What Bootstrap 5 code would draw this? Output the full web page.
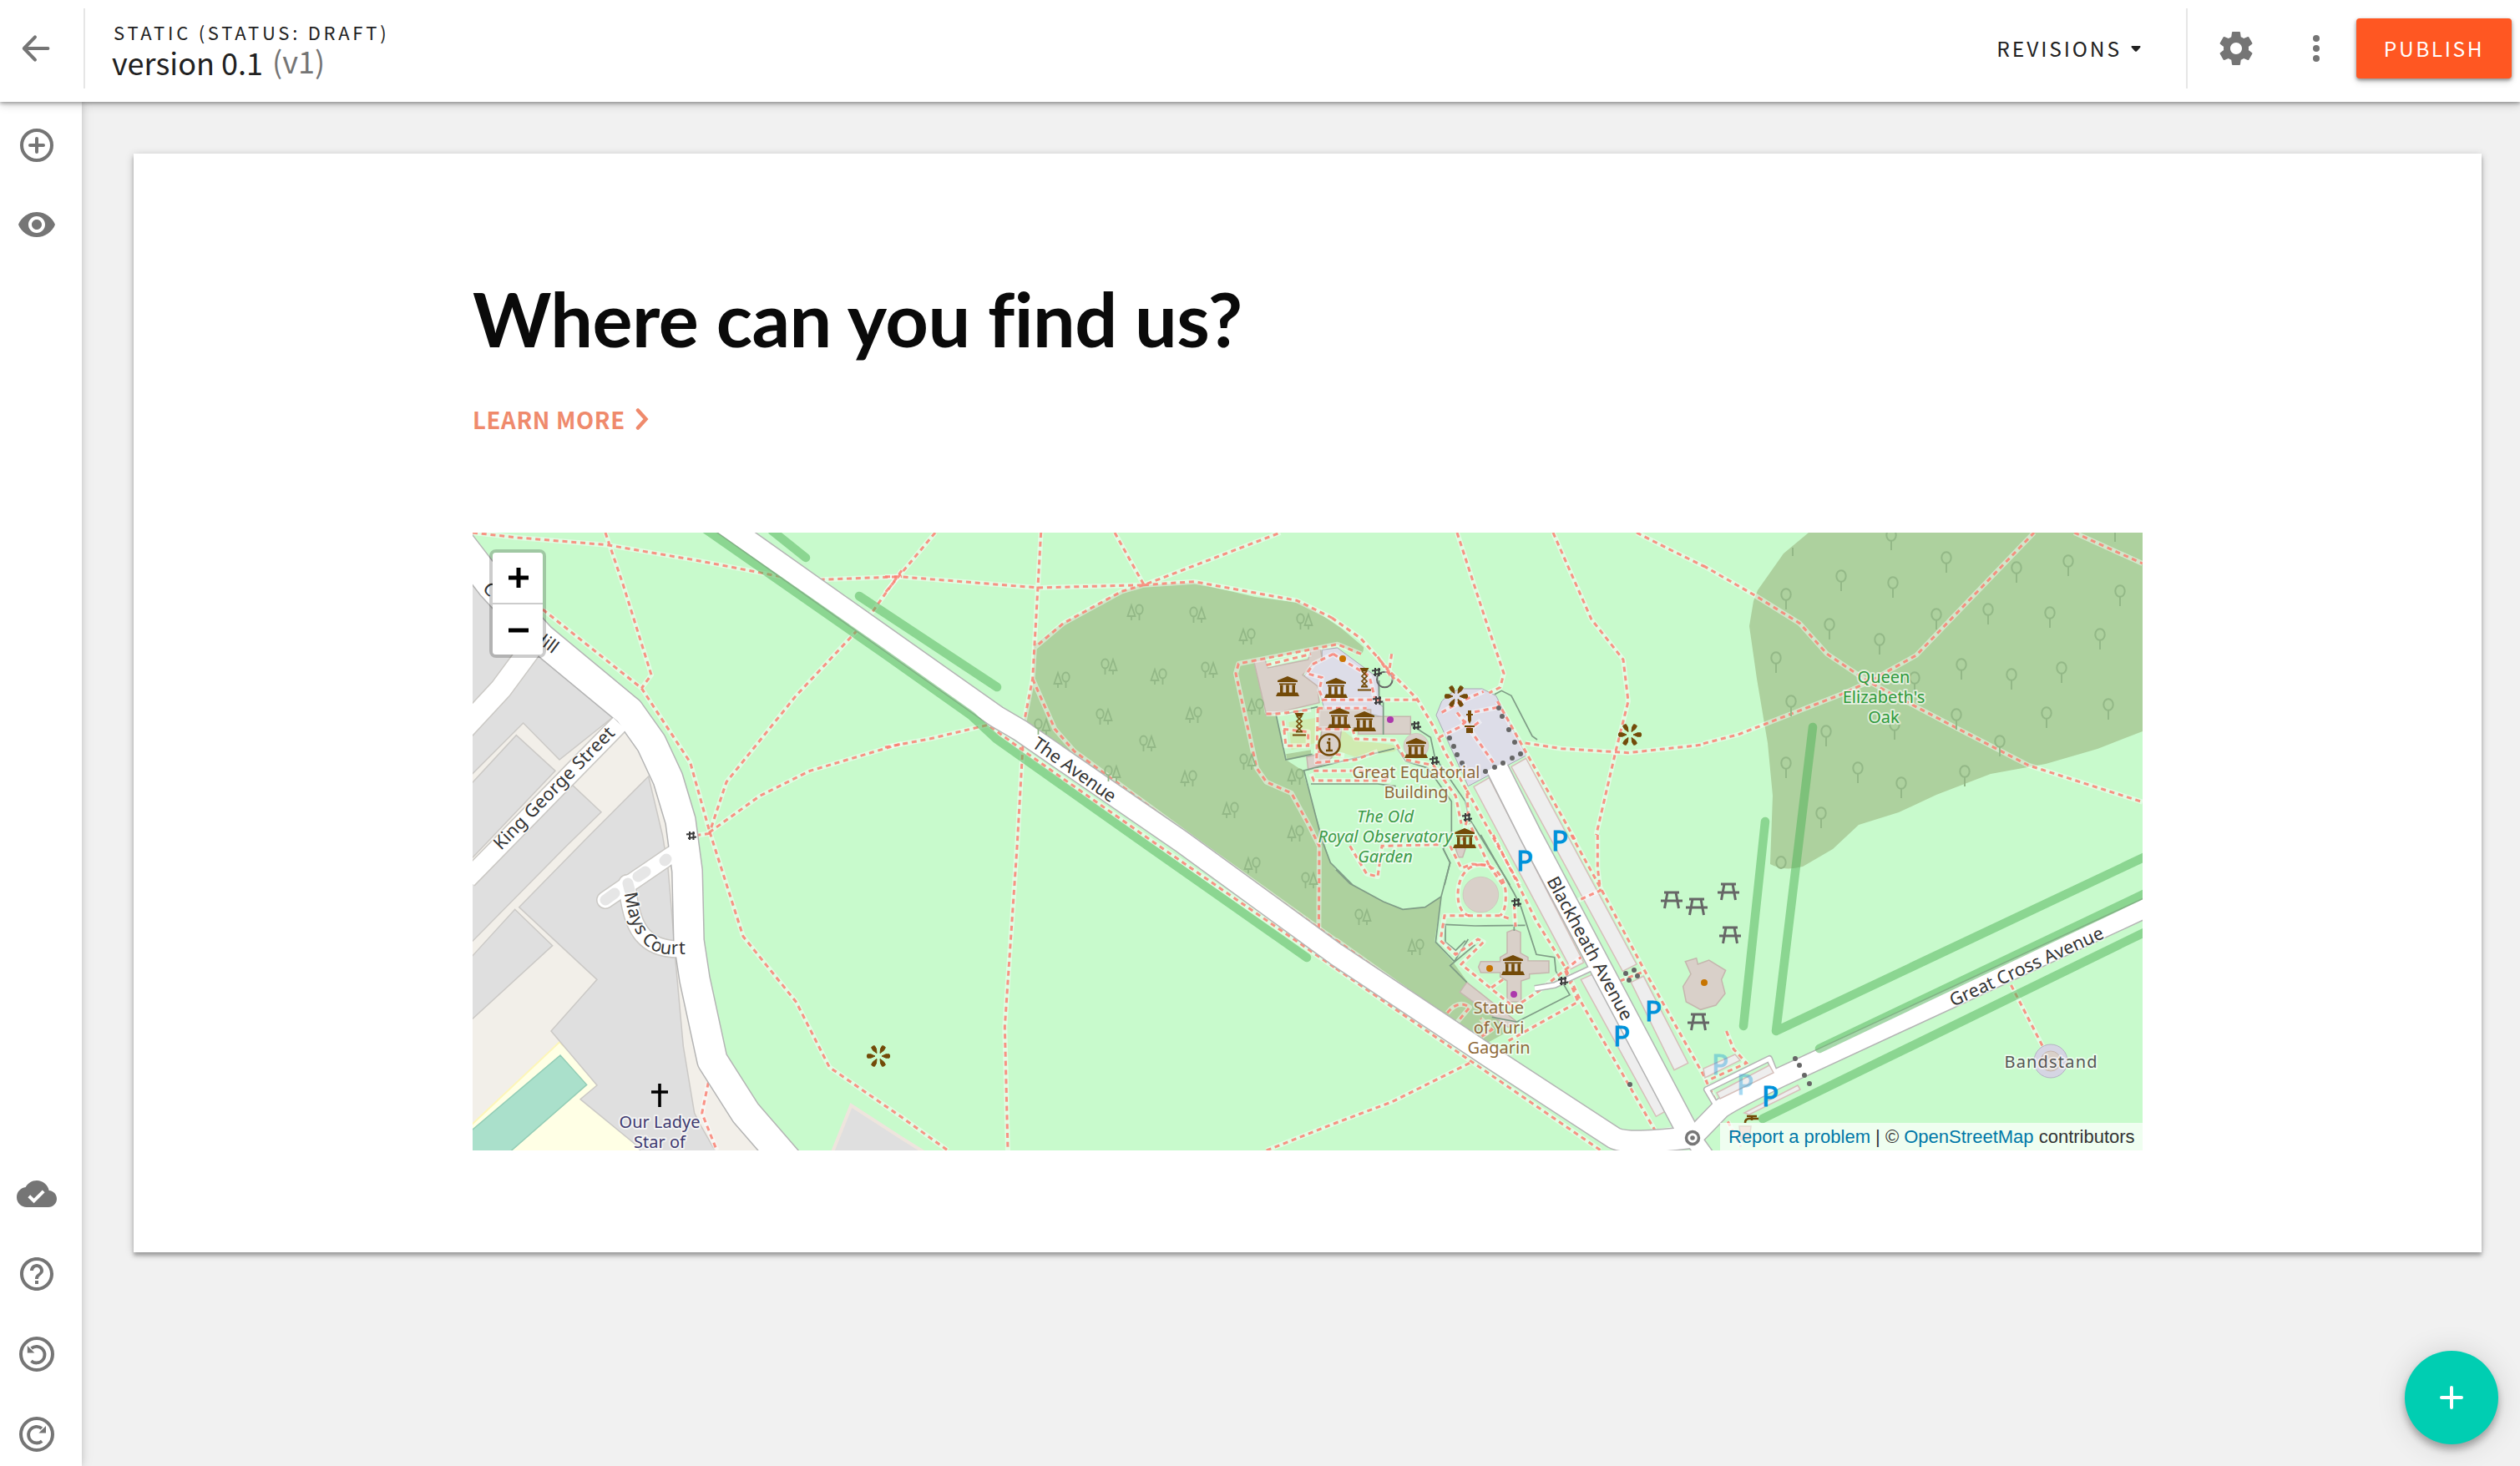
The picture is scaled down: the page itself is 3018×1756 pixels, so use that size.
<!DOCTYPE html>
<html lang="en">
<head>
<meta charset="utf-8">
<meta name="viewport" content="width=device-width, initial-scale=1">
<title>version 0.1 (v1)</title>
<link href="https://cdn.jsdelivr.net/npm/bootstrap@5.3.0/dist/css/bootstrap.min.css" rel="stylesheet">
<style>
body{font-family:"Noto Sans CJK SC","Noto Sans",sans-serif;background:#f1f1f1;color:#212121;height:100vh;overflow:hidden}
.icon{width:48px;height:48px;fill:#757575;display:block}
.topbar{height:122px;z-index:3;box-shadow:0 2px 4px rgba(0,0,0,.3),0 4px 10px rgba(0,0,0,.16)}
.topbar-row{margin-bottom:6px}
.back-cell{width:102px;height:96px;padding-left:20px;border-right:2px solid #e6e6e6}
.title-block{padding-left:32px}
.status-line{font-size:22px;line-height:32px;letter-spacing:3.75px;padding-left:2px}
.title-line{font-size:36px;line-height:40px}
.title-line span{color:#757575;position:relative;top:-2px;left:3px}
.btn-rev{font-size:24.5px;letter-spacing:2.9px;line-height:36px}
.caret-mark{width:12px;height:7px;margin-left:11px;margin-right:54px}
.tool-split{width:2px;height:96px;background:#e6e6e6}
.gear-icon{margin-left:34px;margin-right:24px}
.btn-publish{--bs-btn-bg:#ff5722;--bs-btn-color:#fff;width:186px;height:72px;margin-right:10px;border-radius:4px;border:0;font-size:24.5px;letter-spacing:2.6px;box-shadow:0 2px 4px rgba(0,0,0,.4),0 4px 8px rgba(0,0,0,.14)}
.siderail{width:98px;z-index:2;padding:27px 0 14px 20px;box-shadow:0 0 8px rgba(0,0,0,.14),2px 0 14px rgba(0,0,0,.07)}
.siderail .grp{gap:48px}
.page-sheet{margin:62px 46px 0 62px;height:1316px;padding:141px 406px 0;box-shadow:0 4px 4px rgba(0,0,0,.25),0 2px 10px rgba(0,0,0,.2)}
.headline{font-family:Lato,sans-serif;font-weight:700;font-size:90px;line-height:112px;letter-spacing:-.55px;color:#0a0a0a;font-variant-ligatures:none}
.more-link{margin-top:45px;font-weight:700;font-size:27.5px;line-height:40px;color:#ef8a6c;letter-spacing:.65px}
.mapbox{width:2000px;height:740px;margin-top:116px}
.mapbox>svg{display:block}
.zoomer{position:absolute;left:20px;top:20px;width:68px;height:130px;border:4px solid rgba(0,0,0,.2);background-clip:padding-box;border-radius:8px}
.zoomer button{height:60px;border:0;background:#fff;padding:0 0 0 2px;display:flex;align-items:center;justify-content:center}
.zoomer button:first-child{height:62px;border-bottom:2px solid #ccc;border-radius:4px 4px 0 0}
.zoomer button:last-child{border-radius:0 0 4px 4px}
.credit{position:absolute;right:0;bottom:0;height:33px;width:506px;padding-left:10px;background:rgba(255,255,255,.7);font:22px/33px "Liberation Sans",Arial,sans-serif;color:#333;white-space:nowrap}
.credit a,.credit a:not([href]){color:#0078a8;text-decoration:none}
.fab{position:fixed;right:26px;bottom:26px;width:112px;height:112px;background:#00ceb2!important;z-index:5;box-shadow:0 6px 10px rgba(0,0,0,.3),0 2px 36px rgba(0,0,0,.14)}
/* map drawing */
.mapbox path{vector-effect:non-scaling-stroke}
.plot{fill:#dfdfdf;stroke:#cbc9c6;stroke-width:1.5}
.verge{stroke:#eee5dd;stroke-width:4}
.cas{fill:none;stroke:#b4b4b4;stroke-linejoin:round}
.rd{fill:none;stroke:#fff;stroke-linejoin:round}
.hedge{fill:none;stroke:#4eb256;stroke-opacity:.5;stroke-width:10.5;stroke-linecap:round;stroke-linejoin:round}
.fw-under{stroke:#fff;stroke-opacity:.45;stroke-width:6;stroke-linejoin:round}
.fw-dash{stroke:#fa8072;stroke-opacity:.85;stroke-width:3;stroke-dasharray:6 4.8}
.bld{fill:#d9d0c9;stroke:#c5b6ae;stroke-width:1.5}
.plaza{fill:#dddde8;stroke:#a9a9b5;stroke-width:1}
.park-lot{fill:#eee;stroke:#d6bfba;stroke-width:1.5}
.fence{fill:none;stroke:#7f9c86;stroke-width:1.7}
.lbl{font-family:"Noto Sans",sans-serif;font-size:20px;stroke:#fff;stroke-opacity:.6;stroke-width:4px;paint-order:stroke;stroke-linejoin:round;text-anchor:middle}
.street{fill:#333;text-anchor:start;font-size:21.5px}
.brown{fill:#8f6a3a}.greeni{fill:#3c9a48;font-style:italic}.oak{fill:#2f9a3c}.purple{fill:#3e3a70}
.pk{font-family:"Noto Sans",sans-serif;font-size:33px;fill:#0092da;stroke:#0092da;stroke-width:1.2;text-anchor:middle}
</style>
<script src="https://cdn.jsdelivr.net/npm/bootstrap@5.3.0/dist/js/bootstrap.bundle.min.js"></script>
</head>
<body class="d-flex flex-column">
<header class="topbar bg-white d-flex align-items-center flex-shrink-0 position-relative">
  <div class="topbar-row d-flex w-100 align-items-center">
  <div class="back-cell d-flex align-items-center">
    <svg class="icon" viewBox="0 0 24 24"><path d="M18.7 12H4.7M11 5.2 4.4 12l6.600 6.800" fill="none" stroke="#757575" stroke-width="2" stroke-linecap="round" stroke-linejoin="round"/></svg>
  </div>
  <div class="title-block me-auto">
    <div class="status-line">STATIC (STATUS: DRAFT)</div>
    <div class="title-line">version 0.1 <span>(v1)</span></div>
  </div>
  <div class="d-flex align-items-center">
    <div class="btn-rev d-flex align-items-center">REVISIONS<svg class="caret-mark" viewBox="0 0 12 7"><path d="M1 0h10q1 .8 0 2L7 6.400q-1 .9-2 0L1 2Q0 .8 1 0z" fill="#212121"/></svg></div>
    <div class="tool-split"></div>
    <svg class="icon gear-icon" viewBox="0 0 24 24"><path d="M19.43 12.98c.04-.32.07-.64.07-.98s-.03-.66-.07-.98l2.11-1.65c.19-.15.24-.42.12-.64l-2-3.46c-.12-.22-.39-.3-.61-.22l-2.49 1c-.52-.4-1.080-.73-1.690-.98l-.38-2.650C14.460 2.180 14.250 2 14 2h-4c-.25 0-.46.18-.49.42l-.38 2.650c-.61.25-1.170.59-1.690.98l-2.490-1c-.23-.09-.49 0-.61.22l-2 3.460c-.13.22-.07.49.12.64l2.110 1.650c-.04.32-.07.65-.07.98s.03.66.07.98l-2.110 1.650c-.19.15-.24.42-.12.64l2 3.460c.12.22.39.3.61.22l2.490-1c.52.4 1.080.73 1.690.98l.38 2.650c.03.24.24.42.49.42h4c.25 0 .46-.18.49-.42l.38-2.650c.61-.25 1.170-.59 1.690-.98l2.490 1c.23.09.49 0 .61-.22l2-3.460c.12-.22.07-.49-.12-.64zM12 15.500c-1.930 0-3.500-1.570-3.500-3.500s1.570-3.500 3.500-3.500 3.500 1.570 3.500 3.500-1.570 3.500-3.500 3.500z"/></svg>
    <svg class="icon ms-4 me-4" viewBox="0 0 24 24"><circle cx="12" cy="6" r="2"/><circle cx="12" cy="12" r="2"/><circle cx="12" cy="18" r="2"/></svg>
    <button class="btn btn-publish">PUBLISH</button>
  </div>
  </div>
</header>

<div class="d-flex flex-grow-1">
  <nav class="siderail bg-white d-flex flex-column justify-content-between position-relative">
    <div class="grp d-flex flex-column">
      <svg class="icon" viewBox="0 0 24 24"><circle cx="12" cy="12.500" r="9" fill="none" stroke="#757575" stroke-width="2"/><path d="M12 8.500v8M8 12.500h8" stroke="#757575" stroke-width="2" stroke-linecap="round"/></svg>
      <svg class="icon" viewBox="0 0 24 24"><path d="M12 4.500C7 4.500 2.730 7.610 1 12c1.730 4.390 6 7.500 11 7.500s9.270-3.110 11-7.500c-1.730-4.390-6-7.500-11-7.500zM12 17c-2.760 0-5-2.240-5-5s2.240-5 5-5 5 2.240 5 5-2.240 5-5 5zm0-8c-1.660 0-3 1.340-3 3s1.340 3 3 3 3-1.340 3-3-1.340-3-3-3z"/></svg>
    </div>
    <div class="grp d-flex flex-column">
      <svg class="icon" viewBox="0 0 24 24"><path d="M19.350 10.040C18.670 6.590 15.640 4 12 4 9.110 4 6.600 5.640 5.350 8.040 2.340 8.360 0 10.910 0 14c0 3.310 2.690 6 6 6h13c2.760 0 5-2.240 5-5 0-2.640-2.050-4.780-4.650-4.960z"/><path d="m7.400 13.400 2.900 2.800L16.100 10.400" fill="none" stroke="#fff" stroke-width="2"/></svg>
      <svg class="icon" viewBox="0 0 24 24"><path d="M11 18h2v-2h-2v2zm1-16C6.480 2 2 6.480 2 12s4.480 10 10 10 10-4.480 10-10S17.520 2 12 2zm0 18c-4.410 0-8-3.590-8-8s3.590-8 8-8 8 3.590 8 8-3.590 8-8 8zm0-14c-2.210 0-4 1.790-4 4h2c0-1.100.9-2 2-2s2 .9 2 2c0 2-3 1.750-3 5h2c0-2.250 3-2.500 3-5 0-2.210-1.790-4-4-4z"/></svg>
      <svg class="icon" viewBox="0 0 24 24"><circle cx="12" cy="12" r="9.500" fill="none" stroke="#757575" stroke-width="2"/><path d="M8.700 16.100A4.900 4.900 0 1 0 8.800 8.500" fill="none" stroke="#757575" stroke-width="1.900"/><path d="M6.400 7v4.200h4.300z"/></svg>
      <svg class="icon" viewBox="0 0 24 24"><circle cx="12" cy="12" r="9.500" fill="none" stroke="#757575" stroke-width="2"/><path d="M15.100 16.100A4.900 4.900 0 1 1 15 8.500" fill="none" stroke="#757575" stroke-width="1.900"/><path d="M17.500 7v4.200h-4.300z"/></svg>
    </div>
  </nav>

  <main class="flex-grow-1">
    <section class="page-sheet bg-white">
      <h1 class="headline m-0">Where can you find us?</h1>
      <a class="more-link d-inline-flex align-items-center text-decoration-none" href="#">LEARN MORE<svg class="ms-2" width="26" height="30" viewBox="0 0 26 30"><path d="M7 4.500 16.500 15 7 25.500" fill="none" stroke="#ef8a6c" stroke-width="4.500" stroke-linecap="round"/></svg></a>
      <div class="mapbox position-relative overflow-hidden">
        <svg width="2000" height="740" viewBox="566 638 2000 740">
          <defs>
            <symbol id="t1" overflow="visible"><g fill="none" stroke="#93b887" stroke-width="2"><ellipse rx="5.700" ry="6.800"/><path d="M0 7V18"/></g></symbol>
            <symbol id="pa" overflow="visible"><g fill="none" stroke="#93b887" stroke-width="1.800"><ellipse cx="-4.500" cy="-3" rx="4.200" ry="5.500"/><path d="M-4.500 2.500V10M5 -8 0.500 5H9.500ZM5 5V10"/></g></symbol>
            <symbol id="pb" overflow="visible"><g transform="scale(-1 1)"><use href="#pa"/></g></symbol>
            <symbol id="mus" overflow="visible"><path fill="#734a08" d="M-12-7 0-12 12-7v2h-24zM-10-3.500h20v1.700h-20zM-9-1.500h3.500v9H-9zM-1.800-1.500h3.600v9h-3.600zM5.500-1.500H9v9H5.500zM-12 7.500h24l2 4.500h-28z"/></symbol>
            <symbol id="star" overflow="visible"><g fill="#734a08" stroke="#734a08" stroke-width="1" stroke-linejoin="round"><g id="petal2"><path d="M4 0 9-2.200 13-2.200q1.400 2.200 0 4.400L9 2.200z"/><path d="M-4 0-9-2.200-13-2.200q-1.400 2.200 0 4.400L-9 2.200z"/></g><use href="#petal2" transform="rotate(60)"/><use href="#petal2" transform="rotate(120)"/></g></symbol>
            <symbol id="pic" overflow="visible"><path d="M-9-9H9M-13 1H13M-5-9-8.500 10M5-9 8.500 10" fill="none" stroke="#666" stroke-width="3"/></symbol>
            <symbol id="gate" overflow="visible"><path d="M-6-1.500 4-3M-4 3 6 1.500M-2-5V5M2.500-5V5" fill="none" stroke="#3a3a3a" stroke-width="2"/></symbol>
            <symbol id="tel" overflow="visible"><path d="M-5.500-14h11L3-9.500h-6zM-8 11.500H8v2H-8zM-4 7.500h8v2h-8z" fill="#734a08"/><path d="M-3-10 3-4-3 2 3 8M3-10-3-4 3 2-3 8" fill="none" stroke="#734a08" stroke-width="1.700"/></symbol>
            <g id="ways" fill="none">
              <g transform="translate(560 630) scale(.33333)">
                <path d="M18 24 180 42 500 68 830 125 1140 185M495 24 560 215 660 535 625 583M270 300 625 583 800 850 870 1100M1265 193 1560 182M1560 160 1450 315M1400 375 1180 610 930 920 870 1100 1050 970 1230 880 1560 782M820 1112 870 1105M18 60 85 130"/>
              </g>
              <g transform="translate(560 1000) scale(.33333)">
                <path d="M870-10 990 365 1180 600 1300 835 1560 1015 1725 1134M865 890 842 1000 895 1133"/>
              </g>
              <g transform="translate(1060 630) scale(.33333)">
                <path d="M180 24 50 180 0 240M0 182 50 182 550 222 930 212M560 24 530 550 500 700M825 24 930 212 1420 24M930 212 1110 200 1480 268 1605 330M930 212 850 235 640 350 540 435M530 550 610 730 680 810 1130 1140 1620 1490M0 795 160 765 370 715 500 810 970 1140 1620 1590M495 790 475 1140 430 1800 441 2244"/>
              </g>
              <g transform="translate(1450 740) scale(.33333)">
                <path d="M435 0 540 75 650 200 740 290 800 390 840 480 920 620 925 700 905 800M885-306 985 0 1053 200 1040 250 1000 270M540 130 455 95 100 165 90 200 165 540 200 590 290 630 350 740 390 820 388 1150M400 295H740M440 130 570 210 590 290M440 130 370 165 345 200 400 215 390 260 405 300M385 325H560M385 325 380 520 520 510 600 480M260 370 270 460 350 460 350 410 260 400M370 550H600L640 585H370L360 560M510 400 520 435 660 440 700 510 800 530 880 640 900 740M920 620 1110 960M820 430 900 390 940 340 1040 320M830 340 900 300 980 265M930 400 1015 520M885 340 930 400 970 370M1130 450 1260 470 1500 485 1770 456M1030 300 1260 710 1310 800M500 820 560 920 600 930 615 820 820 815M860 820 900 900 940 885 1000 890 930 740M650 130 640 200 600 140 660 220M380 400H510M200 345 240 345 360 330M200 170 360 130M385 480 480 495M1000 890 1050 960"/>
                <path d="M1230-306 1368 6 1482 150 1500 300 1455 480 1385 780M1530-306 1640-250 1772-185"/>
              </g>
              <g transform="translate(1600 1000) scale(.33333)">
                <path d="M565 0 660 190 720 310 820 470 880 600 1145 1060M845 0 950 190 1110 490 1330 880M940 0 940 120 950 200 860 240M640 250 645 330M620 300 590 290H390L375 380 430 430 510 375 530 385 450 465 640 620 730 560 880 440M600 520 550 555M620 740 870 600 820 480M-250 1134 0 1035 200 960 480 820M400 640Q440 590 480 620L430 680 500 740 560 700 520 660M0 378 480 720 600 800 1010 1065 1100 1075 1220 1055M0 480 950 1133M1020 525 1110 490"/>
                <path d="M520 107C465 107 438 160 438 215S465 290 480 290M520 107C575 107 610 160 610 215S600 280 590 290"/>
              </g>
              <g transform="translate(2040 1000) scale(.34439 .33333)">
                <path d="M80 705 105 770 150 820 10 885 45 960M1070 540 1180 760M85 1030 130 1120"/>
              </g>
              <g transform="translate(2040 630) scale(.34439 .33333)">
                <path d="M0 782 120 750 480 605 575 560 740 465 1150 24M0 143 180 250 335 350 430 460 575 560 860 715 1130 860 1527 992M1290 24 1527 135"/>
              </g>
            </g>
          </defs>
          <rect x="566" y="638" width="2000" height="740" fill="#c8facc"/>
          <!-- built-up area west of the park -->
          <path fill="#f2efe9" d="M566 670 590 702 648 765 753 852 780 890 800 933 815 983 823 1043 825 1127 832 1173 853 1270 893 1333 945 1393H566z"/>
          <g transform="translate(560 630) scale(.33333)">
            <path class="plot" d="M10 205 90 295 260 465 525 685 330 840 200 708 10 898zM10 930 175 752 315 880 10 1200z"/>
            <path class="plot" d="M370 925 480 1028 360 1145 10 1500V1290z"/>
          </g>
          <g transform="translate(560 1000) scale(.33333)">
            <path fill="#ffffe5" stroke="#fdf6b8" stroke-width="2" d="M10 1046 330 745 500 900 640 1150H10z"/>
            <path fill="#aae0cb" stroke="#93cdb6" stroke-width="1.500" d="M10 1066 333 792 428 898 150 1141H10z"/>
            <path class="plot" d="M650-210 440 0 185 260 465 520 300 705 465 900 405 950 600 1110 630 1145 895 1145 835 1040 815 1000 775 760 745 430 742 380 720 120 700 0z"/>
            <path class="plot" d="M10 443 170 268 305 398 10 668z"/>
            <path class="plot verge" d="M1311 1140 1378 972 1560 1090 1640 1140z"/>
          </g>
          <!-- woods -->
          <path fill="#add19e" d="M1238 773 1267 750 1343 708 1370 701 1430 698 1503 715 1557 722 1582 736 1607 753 1633 775Q1634 784 1625 784L1602 772 1503 792 1515 855 1528 857 1540 910 1560 923 1593 1033 1600 1042 1617 1058 1657 1080 1680 1089 1707 1087 1726 1074 1718 1128 1740 1152 1758 1177 1805 1236 1780 1250 1600 1140 1415 1008 1225 868 1238 817z"/>
          <path fill="#add19e" d="M2166 638 2136 663 2105 707 2100 720 2095 750 2104 813 2117 890 2123 953 2120 1035Q2136 1044 2159 1038L2195 1017 2226 988 2274 973 2319 952 2384 927 2450 915 2512 897 2566 876V638z"/>
          <!-- buildings and squares -->
          <g transform="translate(1450 740) scale(.33333)">
            <path fill="#c9f7cb" d="M240 350 385 325V470L275 490z"/>
            <path fill="#d0ebb0" d="M280 375 375 360 375 450 290 475zM470 400 520 440 680 460 660 480 520 500 460 480z"/>
            <path fill="#add19e" d="M270 490 360 475V495L275 512z"/>
            <path class="plaza" d="M400 115 455 108 600 215 605 310 620 320V357L520 333H410L385 250 335 212 365 165 400 150zM810 350 830 300Q870 255 910 255H975L1025 280 1133 495 925 605z"/>
            <path class="bld" d="M155 155 195 150 205 180 350 150 360 115 395 115 400 150 370 165 330 205 383 245 390 305 200 350zM390 330H575V355H718V418H530V395H390zM345 500 385 490 400 400 470 400 460 470 420 520 350 545zM620 355V418M880 830 900 815 915 830 905 860 890 860z"/>
            <circle class="bld" cx="738" cy="460" r="45"/>
            <path class="park-lot" d="M945 607 1000 575 1340 1239 1294 1262zM1080 535 1133 505 1530 1245 1480 1270z"/>
            <path class="fence" d="M235 350 270 510 365 490M270 345 385 320M330 550 660 470M360 597H600L665 605M335 550 400 800 430 880 510 960M670 470 700 515 780 540 865 660 865 790 835 830 860 880 840 960M720 385 790 430 805 500 915 660 925 715 1075 960M1020 275 1045 262 1080 280 1155 425 1173 438M605 225V300H620V420"/>
            <circle cx="625" cy="222" r="28" fill="none" stroke="#666" stroke-width="6"/>
          </g>
          <g transform="translate(1600 1000) scale(.33333)">
            <circle class="bld" cx="520" cy="215" r="64"/>
            <path class="bld" d="M615 350 640 340 663 350V425L690 440V452L765 453V495L695 500V515L665 525V600H615V525L590 510V495H520L512 475 520 455H590V440L615 425zM470 530 650 672 620 692 445 565zM1255 455 1295 443 1300 465 1340 450 1400 487 1385 520 1398 570 1365 612 1310 628 1258 600 1247 545 1275 500z"/>
            <path class="park-lot" d="M880 520 925 500 1190 990 1150 1012zM1060 530 1105 508 1265 820 1215 845z"/>
            <path class="fence" d="M0 125 50 175 170 240 240 268 320 260 378 222 410 100 385 50M378 222 358 385 425 455 475 375M410 470 470 530 410 470 500 395M520 0 640 210 665 260 720 430 785 440 790 490 840 575 650 672M390 322 500 327 680 325M393 322V385L430 415 465 380M640 325V345M560 655 650 672"/>
          </g>
          <use href="#ways" class="fw-under"/>
          <use href="#ways" class="fw-dash"/>
          <!-- roads -->
          <g class="cas">
            <g stroke="#cac8c4">
              <path d="M550 879 600 825 645 764" stroke-width="28"/><path d="M560 1053 742 867" stroke-width="24"/>
              <path d="M807 1022 725 1078M751 1058C755 1110 770 1138 815 1137" stroke-width="22" stroke-linecap="round"/>
            </g>
            <path d="M550 650 590 702 648 765 753 852 780 890 800 933 815 983 823 1043 825 1127 832 1173 853 1270 893 1333 945 1393" stroke-width="38"/>
            <path d="M865 626 1060 764 1193 858 1222 875 1415 1008 1600 1143 1780 1263 1933 1363Q1950 1372 2027 1362" stroke-width="28"/>
            <path d="M1794 922 1833 1000 2025 1363" stroke-width="28"/><path d="M2027 1363 2061 1328Q2075 1318 2133 1290L2580 1083" stroke-width="25"/>
            <path d="M2027 1363 2050 1395" stroke-width="22"/>
            <path d="M2054 1322 2044 1305 2119 1268 2127 1288M1838 1184 1862 1180 1905 1160" stroke-width="8"/>
          </g>
          <g class="rd">
            <path d="M550 879 600 825 645 764" stroke-width="25"/><path d="M560 1053 742 867" stroke-width="21"/>
            <path d="M807 1022 725 1078M751 1058C755 1110 770 1138 815 1137" stroke-width="19" stroke-linecap="round"/>
            <path d="M550 650 590 702 648 765 753 852 780 890 800 933 815 983 823 1043 825 1127 832 1173 853 1270 893 1333 945 1393" stroke-width="35"/>
            <path d="M865 626 1060 764 1193 858 1222 875 1415 1008 1600 1143 1780 1263 1933 1363Q1950 1372 2027 1362" stroke-width="25"/>
            <path d="M1792 918 1833 1000 2025 1363" stroke-width="25"/><path d="M2027 1363 2061 1328Q2075 1318 2133 1290L2580 1083" stroke-width="22"/>
            <path d="M2027 1363 2050 1395" stroke-width="19"/>
            <path d="M2054 1322 2044 1305 2119 1268 2127 1288M1838 1184 1862 1180 1905 1160" stroke-width="5"/>
            <path d="M798 1029 796 1031M773 1044 764 1050M736 1070 725 1078M752 1058 754 1066" stroke="#e6e6e6" stroke-width="13" stroke-linecap="round"/>
          </g>
          <g class="park-lot"><path d="M2056 1309 2119 1276 2124 1285 2060 1316zM2040 1280 2078 1263 2084 1270 2042 1291zM2089 1333 2153 1300 2156 1305 2095 1335z"/></g>
          <g class="hedge">
            <path d="M845 634 1060 784 1163 857 1193 885 1370 1010 1565 1147M925 636 965 668M1029 714 1194 823M2114 984 2088 1229M2171 871 2127 1235 2580 1021M2179 1256 2580 1065M2111 1340 2580 1111"/>
          </g>
          <!-- trees -->
          <g>
            <use href="#pb" x="1360" y="733"/><use href="#pa" x="1434" y="736"/><use href="#pa" x="1562" y="744"/><use href="#pb" x="1494" y="762"/>
            <use href="#pa" x="1328" y="798"/><use href="#pb" x="1272" y="814"/><use href="#pb" x="1388" y="810"/><use href="#pa" x="1448" y="802"/>
            <use href="#pa" x="1322" y="858"/><use href="#pb" x="1430" y="856"/><use href="#pa" x="1248" y="870"/><use href="#pa" x="1374" y="890"/>
            <use href="#pa" x="1332" y="926"/><use href="#pb" x="1424" y="932"/><use href="#pa" x="1494" y="912"/><use href="#pb" x="1552" y="930"/>
            <use href="#pb" x="1474" y="970"/><use href="#pb" x="1552" y="998"/><use href="#pb" x="1504" y="846"/><use href="#pb" x="1500" y="1036"/><use href="#pa" x="1568" y="1054"/>
            <use href="#pa" x="1632" y="1098"/><use href="#pb" x="1696" y="1134"/>
            <use href="#t1" x="2265" y="641"/><use href="#t1" x="2331" y="668"/><use href="#t1" x="2415" y="680"/><use href="#t1" x="2477" y="672"/><use href="#t1" x="2539" y="708"/>
            <use href="#t1" x="2205" y="690"/><use href="#t1" x="2267" y="698"/><use href="#t1" x="2139" y="712"/><use href="#t1" x="2319" y="736"/><use href="#t1" x="2381" y="730"/><use href="#t1" x="2455" y="734"/>
            <use href="#t1" x="2191" y="748"/><use href="#t1" x="2251" y="766"/><use href="#t1" x="2515" y="760"/><use href="#t1" x="2127" y="788"/><use href="#t1" x="2349" y="796"/><use href="#t1" x="2409" y="808"/><use href="#t1" x="2469" y="800"/>
            <use href="#t1" x="2145" y="840"/><use href="#t1" x="2293" y="812"/><use href="#t1" x="2343" y="856"/><use href="#t1" x="2451" y="854"/><use href="#t1" x="2525" y="844"/><use href="#t1" x="2187" y="876"/><use href="#t1" x="2269" y="868"/>
            <use href="#t1" x="2395" y="888"/><use href="#t1" x="2139" y="914"/><use href="#t1" x="2225" y="920"/><use href="#t1" x="2277" y="938"/><use href="#t1" x="2353" y="924"/><use href="#t1" x="2181" y="974"/>
            <path d="M2147 656V666M2533 638V649" stroke="#93b887" stroke-width="2"/><ellipse cx="2133" cy="1033" rx="5.700" ry="7" fill="none" stroke="#93b887" stroke-width="2"/>
          </g>
          <!-- symbols -->
          <g>
            <use href="#mus" x="1542" y="822"/><use href="#mus" x="1600" y="824"/><use href="#mus" x="1604" y="860"/><use href="#mus" x="1634" y="864"/><use href="#mus" x="1696" y="896"/><use href="#mus" x="1754" y="1004"/><use href="#mus" x="1812" y="1156"/>
            <use href="#star" x="1052" y="1265"/><use href="#star" x="1744" y="834"/><use href="#star" x="1952" y="880"/>
            <use href="#tel" x="1634" y="814"/><use href="#tel" x="1556" y="868"/>
            <path d="M1758 851h4v12l-2 4-2-4zM1756 855h8v2h-8zM1754 869h12v2h-12zM1756 872h8v6h-8z" fill="#734a08"/>
            <circle cx="1592" cy="892" r="12.500" fill="#d9d0c9" stroke="#734a08" stroke-width="2.600"/><path d="M1592 884v3M1589 889.500h3v9M1588 899h8" fill="none" stroke="#734a08" stroke-width="2.600"/>
            <use href="#gate" x="1649" y="805"/><use href="#gate" x="1650" y="839"/><use href="#gate" x="1696" y="869"/><use href="#gate" x="1718" y="911"/><use href="#gate" x="1757" y="979"/><use href="#gate" x="1816" y="1081"/><use href="#gate" x="1872" y="1175"/><use href="#gate" x="828" y="1001"/>
            <circle cx="1608" cy="789" r="4" fill="#c77400"/><circle cx="1784" cy="1160" r="4" fill="#c77400"/><circle cx="2041" cy="1177" r="4" fill="#c77400"/><circle cx="1665" cy="862" r="4" fill="#ac39ac"/><circle cx="1813" cy="1191" r="4" fill="#ac39ac"/>
            <path d="M1795 848h0M1799 858h0M1807 874h0M1814 889h0M1821 903h0M1811 908h0M1800 914h0M1790 919h0M1779 924h0M1736 884h0M1741 894h0M1745 904h0M1751 914h0M1947 1166h0M1957 1162h0M1951 1174h0M1961 1169h0M1952 1299h0M2150 1268h0M2155 1276h0M2161 1288h0M2167 1298h0" stroke="#666" stroke-width="6" stroke-linecap="round"/>
            <use href="#pic" x="2002" y="1078"/><use href="#pic" x="2032" y="1086"/><use href="#pic" x="2070" y="1068"/><use href="#pic" x="2072" y="1120"/><use href="#pic" x="2034" y="1224"/>
            <path d="M780 1308h20M790 1298v28" stroke="#000" stroke-width="3.600"/>
            <circle cx="2027" cy="1363" r="7.500" fill="#fff" stroke="#777" stroke-width="3.500"/><circle cx="2027" cy="1363" r="2.800" fill="#777"/>
            <circle cx="2456" cy="1271" r="16" fill="#d9d0c9" stroke="#d5d5e3" stroke-width="8"/><circle cx="2456" cy="1271" r="20" fill="none" stroke="#b4b4c4"/><circle cx="2456" cy="1271" r="12" fill="none" stroke="#c5b6ae"/>
            <path d="M2092 1337h12M2098 1337v5M2090 1345q0-5 5-5h11" fill="none" stroke="#734a08" stroke-width="2.600"/><path d="M2083 1349h14l-2 16h-10z" fill="#d9b9a0" stroke="#b08d6c" stroke-width="1.500"/>
            <text class="pk" x="1826" y="1043">P</text><text class="pk" x="1868" y="1019">P</text><text class="pk" x="1980" y="1223">P</text><text class="pk" x="1942" y="1253">P</text><text class="pk" x="2120" y="1325">P</text>
            <text class="pk" x="2060" y="1287" opacity=".35">P</text><text class="pk" x="2090" y="1311" opacity=".35">P</text>
          </g>
          <!-- labels -->
          <g>
            <text class="lbl street" transform="translate(600 1019) rotate(-45.500)" textLength="196">King George Street</text>
            <text class="lbl street" transform="translate(1235 894) rotate(35.500)" textLength="117">The Avenue</text>
            <text class="lbl street" transform="translate(1852 1055) rotate(61.600)" textLength="192">Blackheath Avenue</text>
            <text class="lbl street" transform="translate(2339 1206) rotate(-24.500)" textLength="200">Great Cross Avenue</text>
            <path id="mays" d="M748 1070C753 1108 768 1141 800 1143L845 1143" fill="none"/>
            <text class="lbl street" textLength="118"><textPath href="#mays">Mays Court</textPath></text>
            <text class="lbl street" transform="translate(577 706) rotate(45)">C</text><text class="lbl street" transform="translate(636 764) rotate(37)">Hill</text>
            <text class="lbl brown" x="1696" y="932" textLength="153">Great Equatorial</text><text class="lbl brown" x="1696" y="956" textLength="77">Building</text>
            <text class="lbl greeni" x="1659" y="985">The Old</text><text class="lbl greeni" x="1659" y="1009" textLength="161">Royal Observatory</text><text class="lbl greeni" x="1659" y="1033">Garden</text>
            <text class="lbl brown" x="1795" y="1214">Statue</text><text class="lbl brown" x="1795" y="1238">of Yuri</text><text class="lbl brown" x="1795" y="1262">Gagarin</text>
            <text class="lbl oak" x="2256" y="818">Queen</text><text class="lbl oak" x="2256" y="842">Elizabeth's</text><text class="lbl oak" x="2256" y="866">Oak</text>
            <text class="lbl" fill="#555" x="2456" y="1279" textLength="111">Bandstand</text>
            <text class="lbl purple" x="790" y="1351" textLength="97">Our Ladye</text><text class="lbl purple" x="790" y="1375" textLength="62">Star of</text>
          </g>
        </svg>
        <div class="zoomer d-flex flex-column">
          <button aria-label="Zoom in"><svg width="24" height="24"><path d="M12 0V24M0 12H24" stroke="#000" stroke-width="5"/></svg></button>
          <button aria-label="Zoom out"><svg width="24" height="24"><path d="M0 13H24" stroke="#000" stroke-width="5"/></svg></button>
        </div>
        <div class="credit"><a href="#">Report a problem</a> | © <a href="#">OpenStreetMap</a> contributors</div>
      </div>
    </section>
  </main>
</div>
<button class="fab btn rounded-circle border-0 p-0 d-flex align-items-center justify-content-center" aria-label="Add"><svg width="28" height="28"><path d="M14 2V26M2 14H26" stroke="#fff" stroke-width="4" stroke-linecap="round"/></svg></button>
</body>
</html>
